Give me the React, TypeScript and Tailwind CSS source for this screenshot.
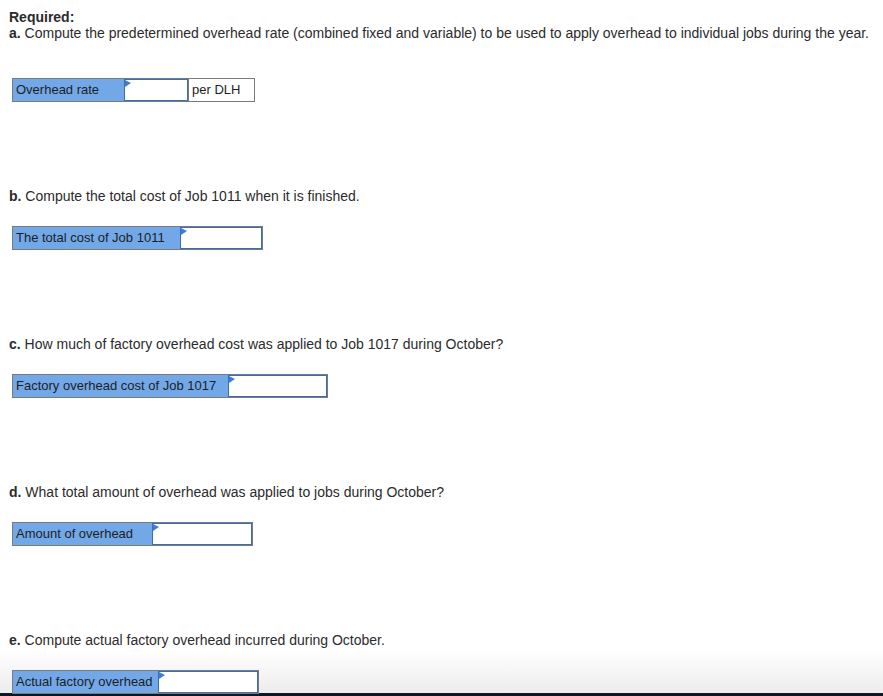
import React from 'react';

type Part = {
  letter: string;
  question: string;
  label: string;
  labelW: string;
  inputW: string;
  unit?: string;
};

const parts: Part[] = [
  {
    letter: 'b.',
    question: 'Compute the total cost of Job 1011 when it is finished.',
    label: 'The total cost of Job 1011',
    labelW: 'w-[167px]',
    inputW: 'w-[82px]',
  },
  {
    letter: 'c.',
    question: 'How much of factory overhead cost was applied to Job 1017 during October?',
    label: 'Factory overhead cost of Job 1017',
    labelW: 'w-[215px]',
    inputW: 'w-[99px]',
  },
  {
    letter: 'd.',
    question: 'What total amount of overhead was applied to jobs during October?',
    label: 'Amount of overhead',
    labelW: 'w-[139px]',
    inputW: 'w-[100px]',
  },
  {
    letter: 'e.',
    question: 'Compute actual factory overhead incurred during October.',
    label: 'Actual factory overhead',
    labelW: 'w-[145px]',
    inputW: 'w-[100px]',
  },
];

const Flag = () => (
  <svg className="absolute left-0 top-0" width="6" height="7" viewBox="0 0 6 7">
    <path d="M0 0 L6 3 L0 7 Z" fill="#3d7dd8" />
  </svg>
);

const AnswerRow: React.FC<{ label: string; labelW: string; inputW: string; unit?: string }> = ({
  label,
  labelW,
  inputW,
  unit,
}) => (
  <div className="flex h-[24px] w-fit border border-[#7a7a7a]">
    <div className={`${labelW} bg-[#72a8e8] pl-[3px] text-[13px] leading-[22px] text-[#1e1e1e]`}>{label}</div>
    <div className={`${inputW} relative border border-[#3c6db8] bg-white`}>
      <Flag />
    </div>
    {unit && (
      <div className="w-[66px] border-l border-[#7a7a7a] bg-white pl-[3px] text-[13px] leading-[22px] text-[#1e1e1e]">
        {unit}
      </div>
    )}
  </div>
);

export default function App() {
  return (
    <div className="h-[696px] overflow-hidden bg-[linear-gradient(to_bottom,#ffffff_650px,#ececec_693px,#0b1626_693px)] font-['Liberation_Sans',Arial,sans-serif] text-[#2b2b2b]">
      <div className="pl-[12px] pt-[9px]">
        <div className="-ml-[3px] text-[14px] leading-[16px]">
          <div className="font-bold">Required:</div>
          <div>
            <span className="font-bold">a.</span> Compute the predetermined overhead rate (combined fixed and variable) to be used to apply overhead to individual jobs during the year.
          </div>
        </div>
        <div className="mt-[37px]">
          <AnswerRow label="Overhead rate" labelW="w-[111px]" inputW="w-[64px]" unit="per DLH" />
        </div>
        {parts.map((p) => (
          <div key={p.letter} className="mt-[86px]">
            <div className="-ml-[3px] text-[14px] leading-[16px]">
              <span className="font-bold">{p.letter}</span> {p.question}
            </div>
            <div className="mt-[22px]">
              <AnswerRow label={p.label} labelW={p.labelW} inputW={p.inputW} unit={p.unit} />
            </div>
          </div>
        ))}
      </div>
    </div>
  );
}
